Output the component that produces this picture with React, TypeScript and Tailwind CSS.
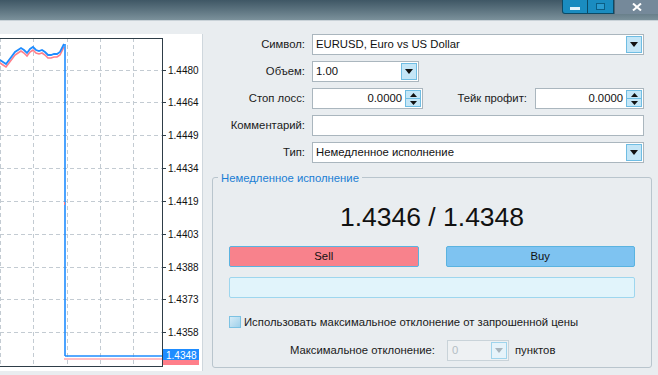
import React from 'react';

const font = { fontFamily: '"Liberation Sans", Arial, sans-serif' };

function DropBtn({ dim }: { dim?: boolean }) {
  return (
    <div className={`w-[16px] h-[17px] flex items-center justify-center border ${dim ? 'border-[#9fd4ec] bg-[#e6f3fa]' : 'border-[#6fbde3] bg-[#c4e6f7]'}`}>
      <svg width="8" height="5" viewBox="0 0 8 5">
        <path d="M0 0 H8 L4 5 Z" fill={dim ? '#a8b4bc' : '#111'} />
      </svg>
    </div>
  );
}

function SpinBtn() {
  return (
    <div className="w-[16px] h-[17px] flex flex-col border border-[#6fbde3] bg-[#c4e6f7]">
      <div className="flex-1 flex items-center justify-center border-b border-[#6fbde3]">
        <svg width="7" height="4" viewBox="0 0 7 4"><path d="M0 4 H7 L3.5 0 Z" fill="#111" /></svg>
      </div>
      <div className="flex-1 flex items-center justify-center">
        <svg width="7" height="4" viewBox="0 0 7 4"><path d="M0 0 H7 L3.5 4 Z" fill="#111" /></svg>
      </div>
    </div>
  );
}

function Label({ children }: { children: React.ReactNode }) {
  return <div className="w-[101px] text-right text-[11.3px] text-[#1a1a1a] mr-[7px]">{children}</div>;
}

function Chart() {
  const hs = [36, 68, 101, 134, 167, 200, 233, 265, 298];
  const labels = ['1.4480', '1.4464', '1.4449', '1.4434', '1.4419', '1.4403', '1.4388', '1.4373', '1.4358'];
  const vs = [0, 33, 67, 100, 133];
  const pts: [number, number][] = [
    [0, 26], [3, 28], [6, 30], [9, 26], [12, 22], [15, 18], [18, 16], [21, 14], [24, 16], [27, 19],
    [30, 15], [33, 13], [36, 16], [39, 17], [42, 16], [45, 18], [48, 21], [51, 21], [54, 20],
    [57, 20], [60, 18], [63, 12], [64, 10],
  ];
  const blue = pts.map((p, i) => `${i ? 'L' : 'M'}${p[0]} ${p[1]}`).join(' ');
  const pink = pts.map((p, i) => `${i ? 'L' : 'M'}${p[0]} ${p[1] + 3}`).join(' ');
  return (
    <svg width="203" height="336" viewBox="0 0 203 336" className="block">
      {hs.map((y) => (
        <line key={y} x1="0" x2="162" y1={y + 0.5} y2={y + 0.5} stroke="#c3cbd2" strokeDasharray="4 3" />
      ))}
      {vs.map((x) => (
        <line key={x} x1={x + 0.5} x2={x + 0.5} y1="4" y2="333" stroke="#c3cbd2" strokeDasharray="4 3" />
      ))}
      <path d={pink} fill="none" stroke="#ff7f8a" strokeWidth="1.6" />
      <path d={blue} fill="none" stroke="#1e8cff" strokeWidth="1.8" />
      <line x1="65" x2="65" y1="10" y2="322" stroke="#1e8cff" strokeWidth="1.6" />
      <rect x="64" y="168" width="1" height="3" fill="#ff7f8a" />
      <line x1="64" x2="162" y1="325" y2="325" stroke="#ff7f8a" strokeWidth="1.2" />
      <line x1="65" x2="162" y1="322" y2="322" stroke="#1e8cff" strokeWidth="1.6" />
      <line x1="0" x2="162" y1="4.5" y2="4.5" stroke="#2e3d47" />
      <line x1="162.5" x2="162.5" y1="4" y2="333" stroke="#2e3d47" />
      <line x1="0" x2="162" y1="332.5" y2="332.5" stroke="#2e3d47" />
      {hs.map((y, i) => (
        <g key={i}>
          <line x1="163" x2="166" y1={y + 0.5} y2={y + 0.5} stroke="#2e3d47" />
          <text x="168" y={y + 4} fontSize="10" fill="#111" style={font}>{labels[i]}</text>
        </g>
      ))}
      <rect x="163" y="326" width="36" height="5" fill="#ff7f8a" />
      <rect x="163" y="315" width="36" height="11" fill="#1e8cff" />
      <text x="166" y="324.5" fontSize="10" fill="#fff" style={font}>1.4348</text>
    </svg>
  );
}

export default function App() {
  return (
    <div className="w-[658px] h-[375px] bg-[#e9edf0] overflow-hidden flex flex-col" style={font}>
      {/* title bar */}
      <div className="h-[20px] bg-gradient-to-b from-[#3f5765] to-[#7b919b] flex justify-end items-start shrink-0">
        <div className="flex h-[14px] rounded-bl-[3px] border border-t-0 border-[#0b4a66] bg-[#1a8cc0] overflow-hidden">
          <div className="w-[25px] flex items-center justify-center border-r border-[#0b4a66]">
            <div className="w-[10px] h-[3px] bg-[#e6f4fb] mt-[4px]" />
          </div>
          <div className="w-[25px] flex items-center justify-center">
            <div className="w-[9px] h-[7px] border border-[#0b5e84] bg-[#2a9cd0]" />
          </div>
        </div>
        <div className="w-[44px] h-[14px] bg-[#75899a] border-l border-[#4e6270] flex items-center justify-center">
          <svg width="10" height="8" viewBox="0 0 10 8">
            <path d="M1 0.5 L9 7.5 M9 0.5 L1 7.5" stroke="#fff" strokeWidth="2" />
          </svg>
        </div>
      </div>
      <div className="h-[1px] bg-[#c9d2d8] shrink-0" />

      <div className="flex flex-1">
        {/* chart */}
        <div className="w-[203px] mt-[13px] h-[337px] bg-white border-r border-[#cfd7dd] shrink-0">
          <Chart />
        </div>

        {/* order form */}
        <div className="flex-1 pt-[13px] pl-[1px] text-[11.3px]">
          <div className="flex flex-col gap-[6px]">
            <div className="flex items-center h-[21px]">
              <Label>Символ:</Label>
              <div className="w-[332px] h-[21px] bg-white border border-[#aab6be] flex items-center justify-between pl-[3px] pr-[1px]">
                <span className="text-[#111]">EURUSD, Euro vs US Dollar</span>
                <DropBtn />
              </div>
            </div>
            <div className="flex items-center h-[21px]">
              <Label>Объем:</Label>
              <div className="w-[107px] h-[21px] bg-white border border-[#aab6be] flex items-center justify-between pl-[3px] pr-[1px]">
                <span className="text-[#111]">1.00</span>
                <DropBtn />
              </div>
            </div>
            <div className="flex items-center h-[21px]">
              <Label>Стоп лосс:</Label>
              <div className="w-[111px] h-[21px] bg-white border border-[#aab6be] flex items-center justify-end pr-[1px]">
                <span className="text-[#111] mr-[3px]">0.0000</span>
                <SpinBtn />
              </div>
              <div className="w-[104px] text-right text-[#1a1a1a] mr-[8px]">Тейк профит:</div>
              <div className="w-[109px] h-[21px] bg-white border border-[#aab6be] flex items-center justify-end pr-[1px]">
                <span className="text-[#111] mr-[3px]">0.0000</span>
                <SpinBtn />
              </div>
            </div>
            <div className="flex items-center h-[21px]">
              <Label>Комментарий:</Label>
              <div className="w-[332px] h-[21px] bg-white border border-[#aab6be]" />
            </div>
            <div className="flex items-center h-[21px]">
              <Label>Тип:</Label>
              <div className="w-[332px] h-[21px] bg-white border border-[#aab6be] flex items-center justify-between pl-[3px] pr-[1px]">
                <span className="text-[#111]">Немедленное исполнение</span>
                <DropBtn />
              </div>
            </div>
          </div>

          {/* group box */}
          <div className="relative ml-[8px] mt-[14px] w-[440px] h-[191px] border border-[#b9c5cd] rounded-[3px] px-[16px]">
            <div className="absolute -top-[8px] left-[5px] px-[3px] bg-[#e9edf0] text-[#1a7dd4] leading-[16px]">
              Немедленное исполнение
            </div>
            <div className="text-center text-[26.5px] text-[#111] leading-[30px] mt-[24px]">1.4346 / 1.4348</div>
            <div className="grid grid-cols-2 gap-[27px] mt-[14px]">
              <div className="h-[21px] bg-[#f8828c] border border-[#5ab3e0] rounded-[2px] flex items-center justify-center text-[#111]">Sell</div>
              <div className="h-[21px] bg-[#7ec3f1] border border-[#5ab3e0] rounded-[2px] flex items-center justify-center text-[#111]">Buy</div>
            </div>
            <div className="h-[21px] mt-[10px] bg-[#e1f4fb] border border-[#9ed6ee] rounded-[2px]" />
            <div className="flex items-center mt-[16px]">
              <div className="w-[12px] h-[12px] border border-[#7cc2e3] bg-gradient-to-br from-[#d6ecf7] to-[#9fd0ea] mr-[3px]" />
              <span className="text-[#1a1a1a]">Использовать максимальное отклонение от запрошенной цены</span>
            </div>
            <div className="flex items-center mt-[9px] h-[21px]">
              <div className="w-[206px] text-right text-[#1a1a1a] mr-[12px]">Максимальное отклонение:</div>
              <div className="w-[62px] h-[21px] border border-[#c9d3d9] bg-[#eef1f3] flex items-center justify-between pl-[4px] pr-[1px]">
                <span className="text-[#b4bec5]">0</span>
                <DropBtn dim />
              </div>
              <span className="text-[#1a1a1a] ml-[6px]">пунктов</span>
            </div>
          </div>
        </div>
      </div>
    </div>
  );
}
